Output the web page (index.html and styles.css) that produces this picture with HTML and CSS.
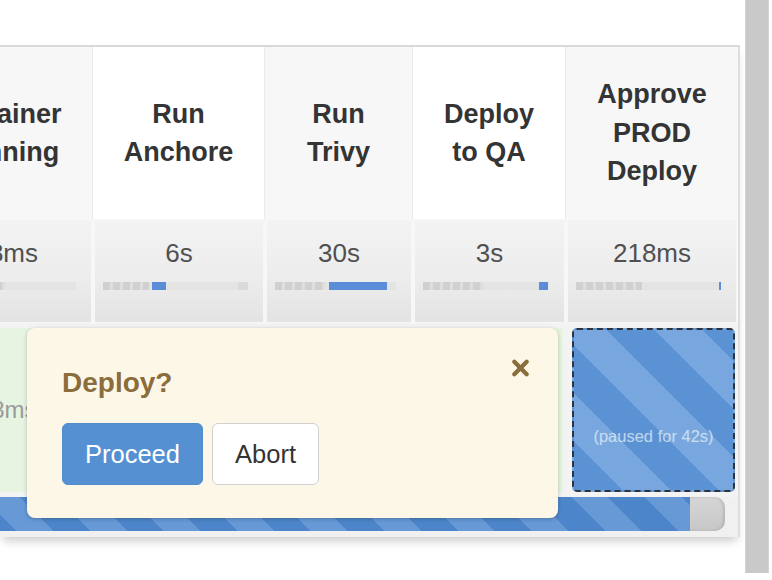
FILE: index.html
```html
<!DOCTYPE html>
<html>
<head>
<meta charset="utf-8">
<link rel="stylesheet" href="styles.css">
</head>
<body>
<div class="page">
  <div class="main">
    <div class="stage">
      <div class="grid">
        <div class="hd">Container<br>Scanning</div>
        <div class="hd white">Run<br>Anchore</div>
        <div class="hd">Run<br>Trivy</div>
        <div class="hd white">Deploy<br>to QA</div>
        <div class="hd last">Approve<br>PROD<br>Deploy</div>

        <div class="du"><div class="du-in">358ms<div class="bar"><span class="dash" style="width:90px"></span></div></div></div>
        <div class="du"><div class="du-in">6s<div class="bar"><span class="dash" style="width:46px"></span><span class="cur" style="margin-left:3px;width:14px"></span><span class="tail"></span></div></div></div>
        <div class="du"><div class="du-in">30s<div class="bar"><span class="dash" style="width:50px"></span><span class="cur" style="margin-left:4px;width:58px"></span></div></div></div>
        <div class="du"><div class="du-in">3s<div class="bar"><span class="dash" style="width:60px"></span><span class="cur" style="margin-left:56px;width:9px"></span></div></div></div>
        <div class="du"><div class="du-in">218ms<div class="bar"><span class="dash" style="width:66px"></span><span class="cur" style="margin-left:77px;width:2px"></span></div></div></div>

        <div class="st"><div class="ok">358ms</div></div>
        <div class="st"><div class="ok">6s</div></div>
        <div class="st"><div class="ok">30s</div></div>
        <div class="st"><div class="ok">3s</div></div>
        <div class="st"><div class="paused">(paused for 42s)</div></div>
      </div>
      <div class="prog"><div class="prog-fill"></div></div>
    </div>

    <div class="pop">
      <svg class="close" viewBox="0 0 20 20" aria-hidden="true">
        <path d="M3.5 3.5 L16.5 16.5 M16.5 3.5 L3.5 16.5" stroke="#8a6d3b" stroke-width="4.6" stroke-linecap="round" fill="none"/>
      </svg>
      <h3 class="pop-title">Deploy?</h3>
      <div class="actions">
        <button class="btn primary">Proceed</button>
        <button class="btn default">Abort</button>
      </div>
    </div>
  </div>
  <div class="vscroll"></div>
</div>
</body>
</html>
```

FILE: styles.css
```css
* { box-sizing: border-box; }
html, body { margin: 0; padding: 0; background: #fff; }
body {
  font-family: "Liberation Sans", Arial, sans-serif;
  color: #333;
  width: 772px;
  height: 580px;
  overflow: hidden;
}
.page { display: flex; align-items: flex-start; height: 580px; }
.main { position: relative; width: 740px; padding-top: 45px; }
.vscroll {
  width: 24px;
  height: 573px;
  margin-left: 5px;
  background: #c9c9c9;
  border-left: 1px solid #d2d2d2;
  border-right: 1px solid #d2d2d2;
}

.stage {
  width: 740px;
  border-top: 2px solid #d9d9d9;
  border-right: 2px solid #dedede;
  background: #f0f0f0;
  overflow: hidden;
  box-shadow: 0 7px 9px -3px rgba(0, 0, 0, 0.2);
}
.grid {
  display: grid;
  grid-template-columns: 188px 172px 148px 153px 172px;
  width: 833px;
  margin-left: -95px;
}

/* header */
.hd {
  height: 172px;
  display: flex;
  align-items: center;
  justify-content: center;
  text-align: center;
  font-weight: bold;
  font-size: 27px;
  line-height: 38.5px;
  color: #343434;
  background: #f7f7f7;
  border-right: 1px solid #ebebeb;
}
.hd.white { background: #fff; }
.hd.last { border-right: 0; }

/* durations */
.du {
  height: 104px;
  padding: 1px 2px 0;
  background: #f7f7f7;
}
.du-in {
  height: 102px;
  padding-top: 15px;
  text-align: center;
  font-size: 26px;
  line-height: 37px;
  color: #505050;
  background: linear-gradient(#f3f3f3, #ececec 60%, #e3e3e3);
}
.bar {
  display: flex;
  height: 8px;
  margin: 10px 15px 0 8px;
  background: #e4e4e4;
}
.dash {
  height: 8px;
  background: repeating-linear-gradient(90deg, #d0d0d0 0 7px, #dedede 7px 10px);
}
.cur { height: 8px; background: #5b8cd7; }
.tail { margin-left: auto; width: 10px; background: #dadada; }

/* status row */
.st {
  height: 174px;
  padding: 5px 3px 5px 6px;
  background: #f3f3f3;
}
.ok {
  height: 100%;
  display: flex;
  align-items: center;
  justify-content: center;
  background: #e7f4e1;
  color: #9a9a9a;
  font-size: 24px;
}
.paused {
  height: 100%;
  border: 2px dashed #2d333c;
  border-radius: 5px;
  background: repeating-linear-gradient(45deg, #5a92d4 0 34px, #77a7de 34px 68px);
  color: rgba(255, 255, 255, 0.5);
  font-size: 16.5px;
  line-height: 18px;
  text-align: center;
  padding-top: 97px;
  text-shadow: 0 0 1px rgba(255, 255, 255, 0.25);
}

/* bottom progress */
.prog {
  display: flex;
  height: 34px;
  margin: 0 13px 6px -20px;
  border-radius: 10px;
  background: linear-gradient(#d6d6d6, #c7c7c7);
  box-shadow: inset -2px 0 3px rgba(0, 0, 0, 0.12);
  overflow: hidden;
}
.prog-fill {
  width: 710px;
  height: 34px;
  background: repeating-linear-gradient(45deg, #4d85ca 0 26px, #6699d6 26px 52px);
}

/* popover */
.pop {
  position: absolute;
  left: 27px;
  top: 328px;
  width: 531px;
  height: 190px;
  padding: 39px 35px 0;
  background: #fdf7e8;
  border-radius: 8px;
  box-shadow: 0 1px 4px rgba(0, 0, 0, 0.22);
}
.pop-title {
  margin: 0;
  font-size: 28px;
  line-height: 31px;
  font-weight: bold;
  color: #8a6d3b;
}
.close {
  position: absolute;
  top: 30px;
  right: 28px;
  width: 19px;
  height: 20px;
}
.actions { display: flex; gap: 9px; margin-top: 25px; }
.btn {
  height: 62px;
  display: flex;
  align-items: center;
  justify-content: center;
  font-family: "Liberation Sans", Arial, sans-serif;
  font-size: 25.5px;
  border-radius: 6px;
  padding: 0;
}
.primary {
  width: 141px;
  background: #5591d2;
  color: #fff;
  border: 1px solid #4f8acb;
}
.default {
  width: 107px;
  background: #fff;
  color: #333;
  border: 1px solid #d0d0d0;
}
```
